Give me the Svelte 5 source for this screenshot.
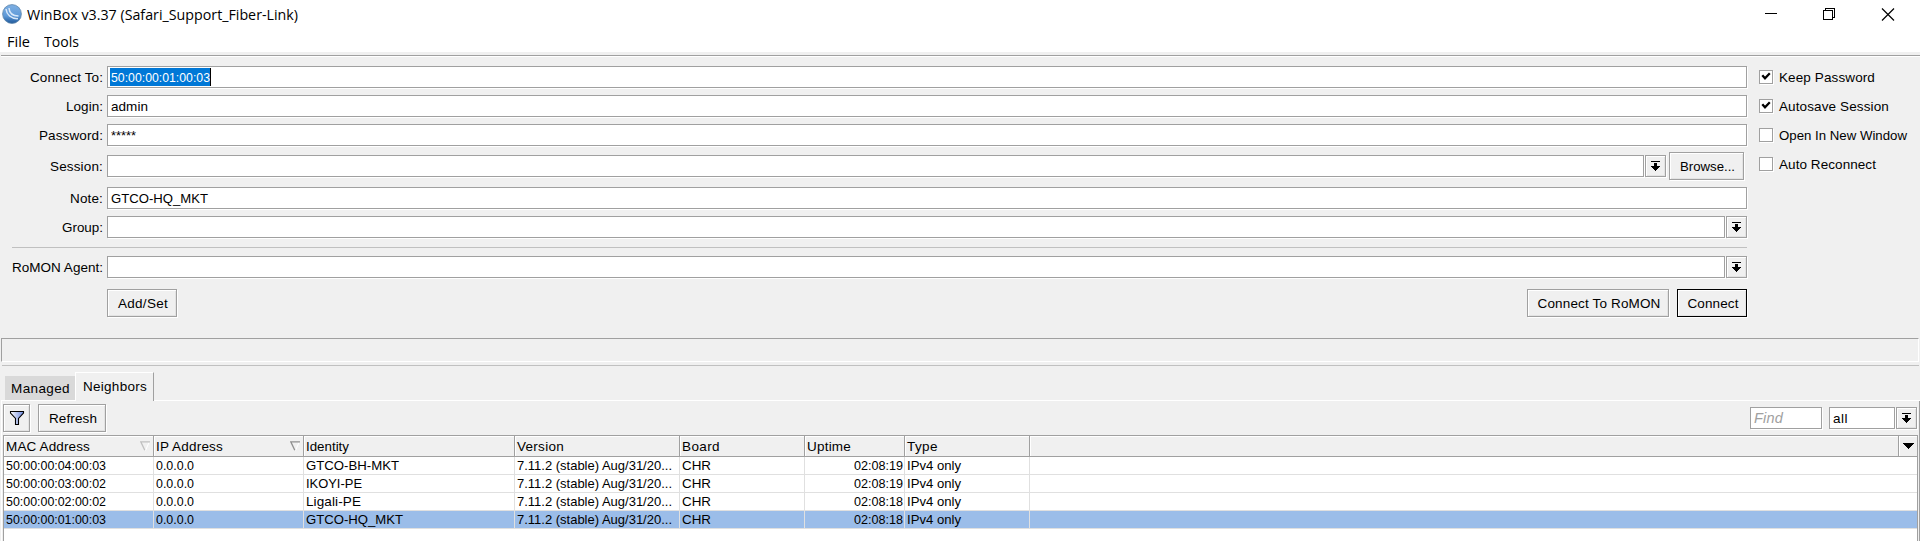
<script>
  // Sets a caption to the given advance width: condensed when it is too wide, spaced out when too narrow.
  function fit(node, width) {
    const count = node.textContent.length;
    const natural = node.getBoundingClientRect().width;
    if (natural > width) {
      node.style.transform = `scaleX(${width / natural})`;
      node.style.marginRight = width - natural + 'px';
    } else {
      node.style.letterSpacing = (width - natural) / count + 'px';
    }
  }

  const options = [
    { text: 'Keep Password', w: 96, on: true },
    { text: 'Autosave Session', w: 110, on: true },
    { text: 'Open In New Window', w: 128, on: false },
    { text: 'Auto Reconnect', w: 97, on: false }
  ];

  const columns = [
    { text: 'MAC Address', w: 84, sort: '#c0c0c0' },
    { text: 'IP Address', w: 67, sort: '#909090' },
    { text: 'Identity', w: 43 },
    { text: 'Version', w: 47 },
    { text: 'Board', w: 38 },
    { text: 'Uptime', w: 44 },
    { text: 'Type', w: 31 }
  ];

  const version = ['7.11.2 (stable) Aug/31/20...', 155];
  const rows = [
    ['50:00:00:04:00:03', 'GTCO-BH-MKT', 93, '02:08:19'],
    ['50:00:00:03:00:02', 'IKOYI-PE', 56, '02:08:19'],
    ['50:00:00:02:00:02', 'Ligali-PE', 55, '02:08:18'],
    ['50:00:00:01:00:03', 'GTCO-HQ_MKT', 97, '02:08:18']
  ].map(([mac, identity, w, uptime], i) => ({
    selected: i === 3,
    cells: [[mac, 100], ['0.0.0.0', 38], [identity, w], version, ['CHR', 29], [uptime, 49], ['IPv4 only', 54]]
  }));
</script>

{#snippet drop()}
  <button class="drop" aria-label="Expand">
    <svg width="9" height="10" viewBox="0 0 9 10" shape-rendering="crispEdges">
      <path d="M0 0h9v1H0zM3 2h3v3h3v1H8v1H7v1H6v1H5v1H4V9H3V8H2V7H1V6H0V5h3z" />
    </svg>
  </button>
{/snippet}

<div class="window">
  <header class="titlebar">
    <svg class="logo" width="20" height="20" viewBox="0 0 20 20">
      <defs>
        <linearGradient id="ball" x1="0" y1="0" x2="0" y2="1">
          <stop offset="0" stop-color="#7fb0e3" />
          <stop offset=".6" stop-color="#5f9ad8" />
          <stop offset="1" stop-color="#1d5799" />
        </linearGradient>
      </defs>
      <circle cx="10" cy="10" r="9.400" fill="url(#ball)" stroke="#5f86ab" stroke-width=".8" />
      <path d="M4 5C4.600 10.500 9 15 16 14.600M7 4C7.300 8.500 10.300 12 16.500 12" fill="none" stroke="#d8e8fa" stroke-width="1.500" />
    </svg>
    <span class="title" use:fit={271}>WinBox v3.37 (Safari_Support_Fiber-Link)</span>
    <svg class="controls" width="130" height="14" viewBox="0 0 130 14" fill="none" stroke="#000" shape-rendering="crispEdges">
      <path d="M0 5.500h12M58.500 2.500h9v9h-9zM60.500 2v-1.500h9v9h-2" />
      <path d="M117 .5l12 12M129 .5l-12 12" shape-rendering="auto" stroke-width="1.200" />
    </svg>
  </header>
  <nav class="menu">
    <span use:fit={23}>File</span>
    <span use:fit={35}>Tools</span>
  </nav>
  <div class="rule"></div>

  <main class="login">
    <div class="fields">
      <div class="row r1"><label for="f"><span use:fit={73}>Connect To:</span></label>
        <div class="input"><mark><span use:fit={99}>50:00:00:01:00:03</span></mark></div></div>
      <div class="row r2"><label for="f"><span use:fit={37}>Login:</span></label>
        <div class="input"><span use:fit={37}>admin</span></div></div>
      <div class="row r3"><label for="f"><span use:fit={64}>Password:</span></label>
        <div class="input"><span use:fit={25}>*****</span></div></div>
      <div class="row r4"><label for="f"><span use:fit={53}>Session:</span></label>
        <div class="input"></div>{@render drop()}
        <button class="btn browse"><span use:fit={55}>Browse...</span></button></div>
      <div class="row r5"><label for="f"><span use:fit={33}>Note:</span></label>
        <div class="input"><span use:fit={97}>GTCO-HQ_MKT</span></div></div>
      <div class="row r6"><label for="f"><span use:fit={41}>Group:</span></label>
        <div class="input"></div>{@render drop()}</div>
      <div class="thin"></div>
      <div class="row r7"><label for="f"><span use:fit={91}>RoMON Agent:</span></label>
        <div class="input"></div>{@render drop()}</div>
      <div class="actions">
        <button class="btn add"><span use:fit={50}>Add/Set</span></button>
        <button class="btn romon"><span use:fit={123}>Connect To RoMON</span></button>
        <button class="btn connect"><span use:fit={51}>Connect</span></button>
      </div>
    </div>
    <div class="options">
      {#each options as o}
        <div class="option">
          <i class="box">
            {#if o.on}
              <svg width="10" height="10" viewBox="0 0 10 10"><path d="M1.300 3.200L4 6.200L8.800 1.300" fill="none" stroke="#000" stroke-width="2.300" /></svg>
            {/if}
          </i>
          <span use:fit={o.w}>{o.text}</span>
        </div>
      {/each}
    </div>
  </main>

  <div class="status"></div>
  <div class="split"></div>

  <div class="tabs">
    <div class="tab"><span use:fit={59}>Managed</span></div>
    <div class="tab active"><span use:fit={64}>Neighbors</span></div>
    <div class="rest"></div>
  </div>

  <section class="pane">
    <div class="toolbar">
      <button class="btn filter" aria-label="Filter">
        <svg width="16" height="16" viewBox="0 0 16 16">
          <defs>
            <linearGradient id="cone"><stop offset="0" stop-color="#fff" /><stop offset="1" stop-color="#6a86dc" /></linearGradient>
          </defs>
          <path d="M1.500 1.500h13v1.500L9.500 8.500v6h-3v-6L1.500 3z" fill="url(#cone)" stroke="#000" stroke-width="1.100" />
        </svg>
      </button>
      <button class="btn refresh"><span use:fit={48}>Refresh</span></button>
      <div class="input find"><span use:fit={29}>Find</span></div>
      <div class="input all"><span use:fit={15}>all</span></div>
      {@render drop()}
    </div>

    <div class="table">
      <div class="line head">
        {#each columns as c}
          <div class="cell">
            <span use:fit={c.w}>{c.text}</span>
            {#if c.sort}
              <svg width="10" height="10" viewBox="0 0 10 10" fill="none"><path d="M9.500 .5L5.500 9.500" stroke="#fff" /><path d="M10 .8H.8L4.800 9.300" stroke={c.sort} stroke-width="1.300" /></svg>
            {/if}
          </div>
        {/each}
        <div class="cell"></div>
        <div class="cell more">
          <svg width="12" height="6" viewBox="0 0 12 6" shape-rendering="crispEdges"><path d="M0 0h12L6 6z" /></svg>
        </div>
      </div>
      {#each rows as r}
        <div class="line" class:selected={r.selected}>
          {#each r.cells as [text, w], i}
            <div class="cell" class:right={i === 5}><span use:fit={w}>{text}</span></div>
          {/each}
          <div class="cell tail"></div>
        </div>
      {/each}
    </div>
  </section>
</div>

<style>
  :global(body) { margin: 0; background: #f0f0f0; overflow: hidden; }
  * { box-sizing: border-box; }
  span { white-space: pre; display: inline-block; transform-origin: 0 50%; flex: none; }
  .window {
    width: 1920px; height: 541px; overflow: hidden; display: flex; flex-direction: column;
    background: #f0f0f0; color: #000; font: 13.5px/16px "Liberation Sans", Arial, sans-serif;
  }
  .titlebar, .menu { background: #fff; display: flex; font-family: "Open Sans", "Noto Sans", sans-serif; flex: none; }
  .titlebar { height: 30px; padding: 4px 25px 0 2px; font-size: 15px; line-height: 21px; }
  .logo { flex: none; }
  .title { margin-left: 5px; }
  .controls { margin: 4px 0 0 auto; }
  .menu { height: 22px; padding-left: 7px; gap: 14px; font-size: 15px; line-height: 23px; }
  .rule { flex: none; height: 2px; margin: 3px 0 0 1px; background: #a0a0a0; border-bottom: 1px solid #fff; }

  .login { display: flex; height: 281px; flex: none; }
  .fields { width: 1747px; padding-top: 9px; }
  .row { display: flex; align-items: center; height: 22px; }
  .row label { width: 107px; padding: 2px 4px 0 0; text-align: right; flex: none; }
  .r2, .r3, .r6 { margin-top: 7px; }
  .r4 { margin-top: 9px; }
  .r5 { margin-top: 10px; }
  .r7 { margin-top: 8px; }
  .input {
    flex: 1; height: 22px; background: #fff; border: 1px solid #a0a0a0; box-shadow: 1px 1px #fff;
    padding: 3px 0 0 3px; line-height: 15px;
  }
  .input mark { display: block; width: 101px; height: 18px; margin: -2px 0 0 -1px; padding: 2px 0 0 1px; background: #0078d7; color: #fff; border-right: 1px solid #000; }
  .drop, .btn {
    appearance: none; font: inherit; color: #000; background: #f0f0f0; border: 1px solid #a0a0a0; border-radius: 0; padding: 0; flex: none;
    box-shadow: 1px 1px #fff, inset 1px 1px #fff, inset -1px -1px #e3e3e3;
    display: flex; align-items: center; justify-content: center;
  }
  .drop { width: 21px; height: 22px; margin-left: 1px; }
  .btn { height: 28px; }
  .btn span { padding-top: 2px; }
  .btn:not(.filter) { padding-left: 2px; }
  .browse { width: 75px; margin: 0 3px; }
  .thin { height: 1px; margin: 9px 0 0 12px; background: #c0c0c0; }
  .actions { display: flex; margin-top: 11px; padding-left: 107px; }
  .add { width: 70px; }
  .romon { width: 142px; margin-left: auto; }
  .connect { width: 70px; margin-left: 8px; border-color: #000; }

  .options { padding: 13px 0 0 12px; display: flex; flex-direction: column; gap: 15px; }
  .option { display: flex; align-items: center; height: 14px; gap: 6px; }
  .option span { padding-top: 2px; }
  .box { width: 14px; height: 14px; background: #fff; border: 1px solid #a0a0a0; box-shadow: 1px 1px #fff; display: flex; align-items: center; justify-content: center; }

  .status { flex: none; height: 24px; margin: 0 1px; border: 1px solid #a0a0a0; border-right-color: #fff; border-bottom-color: #fff; }
  .split { flex: none; height: 1px; margin: 3px 1px 0 2px; background: #c0c0c0; }

  .tabs { display: flex; align-items: flex-end; flex: none; height: 35px; padding-left: 1px; }
  .tab { height: 25px; width: 74px; background: linear-gradient(#d9d9d9, #d9d9d9) 4px 0 no-repeat; border-bottom: 1px solid #fff; padding: 5px 0 0 10px; }
  .tab.active { width: 79px; height: 29px; background: #f0f0f0; border: 1px solid #fff; border-right-color: #a0a0a0; border-bottom: 0; padding: 6px 0 0 7px; }
  .rest { flex: 1; height: 1px; background: #fff; }

  .pane { flex: 1; margin-left: 1px; border-left: 1px solid #fff; border-right: 1px solid #a0a0a0; padding: 3px 1px 0 1px; display: flex; flex-direction: column; }
  .toolbar { display: flex; align-items: center; height: 28px; flex: none; padding-right: 1px; }
  .filter { width: 27px; }
  .refresh { width: 68px; margin-left: 8px; }
  .find { flex: none; width: 72px; margin-left: auto; color: #a0a0a0; font-style: italic; font-size: 14.5px; }
  .all { flex: none; width: 66px; margin-left: 7px; }
  .table { margin-top: 3px; flex: 1; background: #fff; border: 1px solid #a0a0a0; border-bottom: 0; }
  .line {
    display: grid; grid-template-columns: 150px 150px 211px 165px 125px 100px 125px 1fr; height: 18px; border-bottom: 1px solid #e0e0e0;
  }
  .line .cell { border-right: 1px solid #e0e0e0; padding: 1px 0 0 2px; overflow: hidden; }
  .line .tail { border-right: 0; }
  .line .right { text-align: right; padding-right: 1px; }
  .selected { background: #9bbde9; }
  .head { grid-template-columns: 150px 150px 211px 165px 125px 100px 125px 1fr 18px; height: 21px; background: #f0f0f0; border-color: #a0a0a0; }
  .head .cell { border-color: #a0a0a0; box-shadow: inset 1px 1px #fff; display: flex; justify-content: space-between; padding: 3px 3px 0 2px; }
  .head .cell svg { margin-top: 2px; }
  .head .more { border-right: 0; padding: 0; justify-content: center; }
  .head .more svg { margin-top: 7px; }
</style>
